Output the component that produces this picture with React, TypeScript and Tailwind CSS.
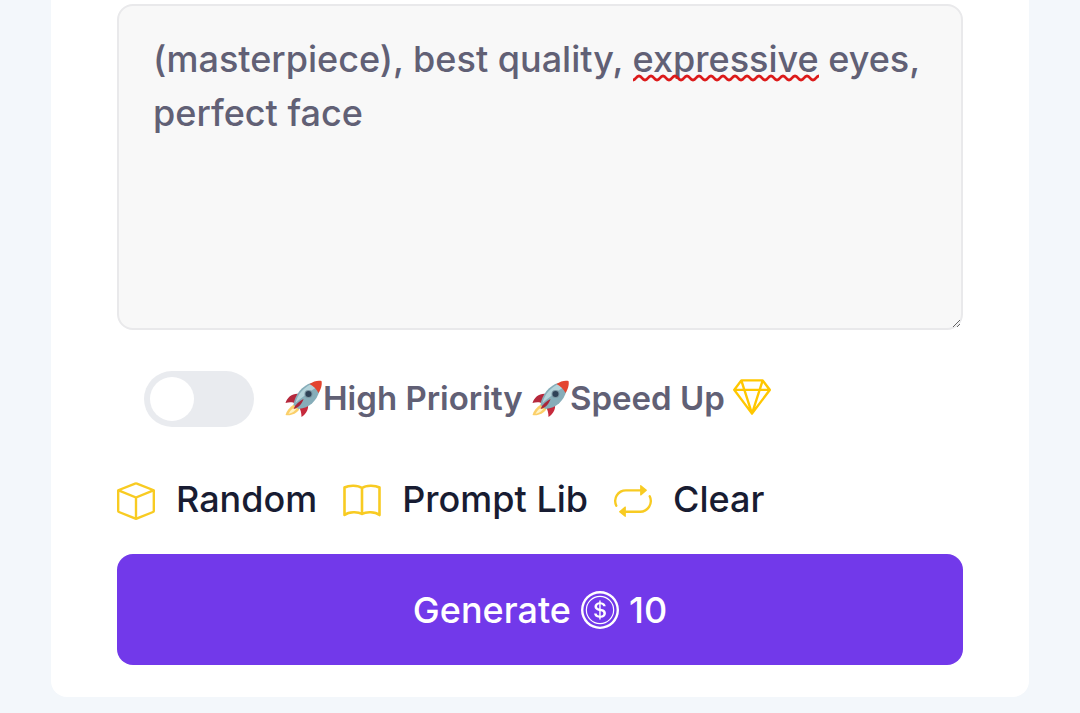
import { useState } from "react";
import { BsBox, BsCoin, BsGem, BsRepeat } from "react-icons/bs";

const DEFAULT_PROMPT = "(masterpiece), best quality, expressive eyes, perfect face";

const Rocket = () => (
  <svg viewBox="0 0 38 38" className="h-[38px] w-[39px] shrink-0" role="img" aria-label="rocket">
    <path d="M10 24 C5 27 2 31 1 35 C6 36 12 34 15 29 Z" fill="#fbcf69" />
    <path d="M9 28 C6 30 5 32 4 34 C8 33 10 31 12 29 Z" fill="#fff3c4" />
    <path d="M15 14 C8 13 3 17 1 23 C5 22 9 22 12 24 Z" fill="#b5283c" />
    <path d="M23 23 C25 28 22 34 17 37 C17 33 16 29 14 26 Z" fill="#c62a3c" />
    <path d="M9 25 C10 15 18 5 27 3 L35 11 C32 21 25 28 14 29 Z" fill="#86adb9" />
    <path d="M11 23 C13 14 20 7 27 4 L31 8 C24 12 17 18 11 23 Z" fill="#b4d3da" />
    <path d="M25 4 C29 1 34 0 37 1 C38 5 36 10 34 13 C32 9 29 6 25 4 Z" fill="#e3442f" />
    <circle cx="24" cy="14" r="4" fill="#7a93a0" />
    <circle cx="24" cy="14" r="3" fill="#2f4257" />
    <path d="M9 29 C11 24 15 21 19 19 C18 23 14 28 9 29 Z" fill="#a8263a" />
  </svg>
);

const Book = () => (
  <svg
    viewBox="0 0 38 38"
    className="mt-1 size-[38px] text-[#f8cb22]"
    fill="none"
    stroke="currentColor"
    strokeWidth="2.6"
    strokeLinejoin="round"
    aria-hidden="true"
  >
    <path d="M19 6 C15 3 6 3 1.5 5.5 V33 C6 29.5 15 29.5 19 32 C23 29.5 32 29.5 36.5 33 V5.5 C32 3 23 3 19 6 Z M19 6 V32" />
  </svg>
);

// Wavy line under the misspelled word
const Squiggle = () => (
  <svg
    className="pointer-events-none absolute top-[70px] left-[516px] h-2 w-[186px]"
    viewBox="0 0 186 8"
    fill="none"
    aria-hidden="true"
  >
    <defs>
      <pattern id="wave" width="12" height="8" patternUnits="userSpaceOnUse">
        <path d="M-3 4 Q0 8 3 4 T9 4 T15 4" stroke="#dc1a1a" strokeWidth="2.9" />
      </pattern>
    </defs>
    <rect width="186" height="8" fill="url(#wave)" />
  </svg>
);

const PromptBox = () => {
  const [prompt, setPrompt] = useState(DEFAULT_PROMPT);

  return (
    <div className="relative">
      <textarea
        aria-label="Prompt"
        spellCheck={false}
        rows={5}
        value={prompt}
        onChange={(e) => setPrompt(e.target.value)}
        className="block w-full resize-y rounded-2xl border-2 border-[#e9e9eb] bg-[#f8f8f8] px-[34px] py-[26px] text-4xl leading-[54px] font-medium text-[#616075] outline-none"
      />
      {prompt === DEFAULT_PROMPT && <Squiggle />}
    </div>
  );
};

const App = () => {
  const [priority, setPriority] = useState(false);

  return (
    <div className="min-h-screen bg-[#f3f7fb] px-[51px] pb-4 font-['Inter',sans-serif]">
      <main className="rounded-b-2xl bg-white px-[66px] pt-1 pb-8">
        <PromptBox />

        <label className="mt-[41px] ml-[27px] flex items-center cursor-pointer">
          <input
            type="checkbox"
            role="switch"
            checked={priority}
            onChange={(e) => setPriority(e.target.checked)}
            className="peer sr-only"
          />
          <span className="flex h-14 w-[110px] shrink-0 items-center rounded-full bg-[#e9ebef] px-[6px] peer-checked:justify-end peer-checked:bg-[#7239ea]">
            <span className="size-11 rounded-full bg-white"></span>
          </span>
          <span className="ml-[30px] flex items-center text-[33px] font-semibold text-[#616075] whitespace-pre">
            <Rocket />
            <span>High Priority </span>
            <Rocket />
            <span>Speed Up </span>
            <BsGem className="mb-1 size-[38px] text-[#ffc700]" />
          </span>
        </label>

        <div className="mt-[45px] flex items-center gap-[26px] text-4xl leading-[54px] font-medium text-[#181c32]">
          <button type="button" className="flex items-center gap-[21px]">
            <BsBox className="mt-1 size-[38px] text-[#f8cb22]" />
            Random
          </button>
          <button type="button" className="flex items-center gap-[21px]">
            <Book />
            Prompt Lib
          </button>
          <button type="button" className="flex items-center gap-[21px]">
            <BsRepeat className="mt-1 size-[38px] text-[#f8cb22]" />
            Clear
          </button>
        </div>

        <button
          type="button"
          className="mt-7 flex h-[111px] w-full items-center justify-center gap-[10px] rounded-2xl bg-[#7239ea] text-4xl font-medium text-white"
        >
          Generate
          <BsCoin className="size-[38px]" />
          10
        </button>
      </main>
    </div>
  );
};

export default App;
